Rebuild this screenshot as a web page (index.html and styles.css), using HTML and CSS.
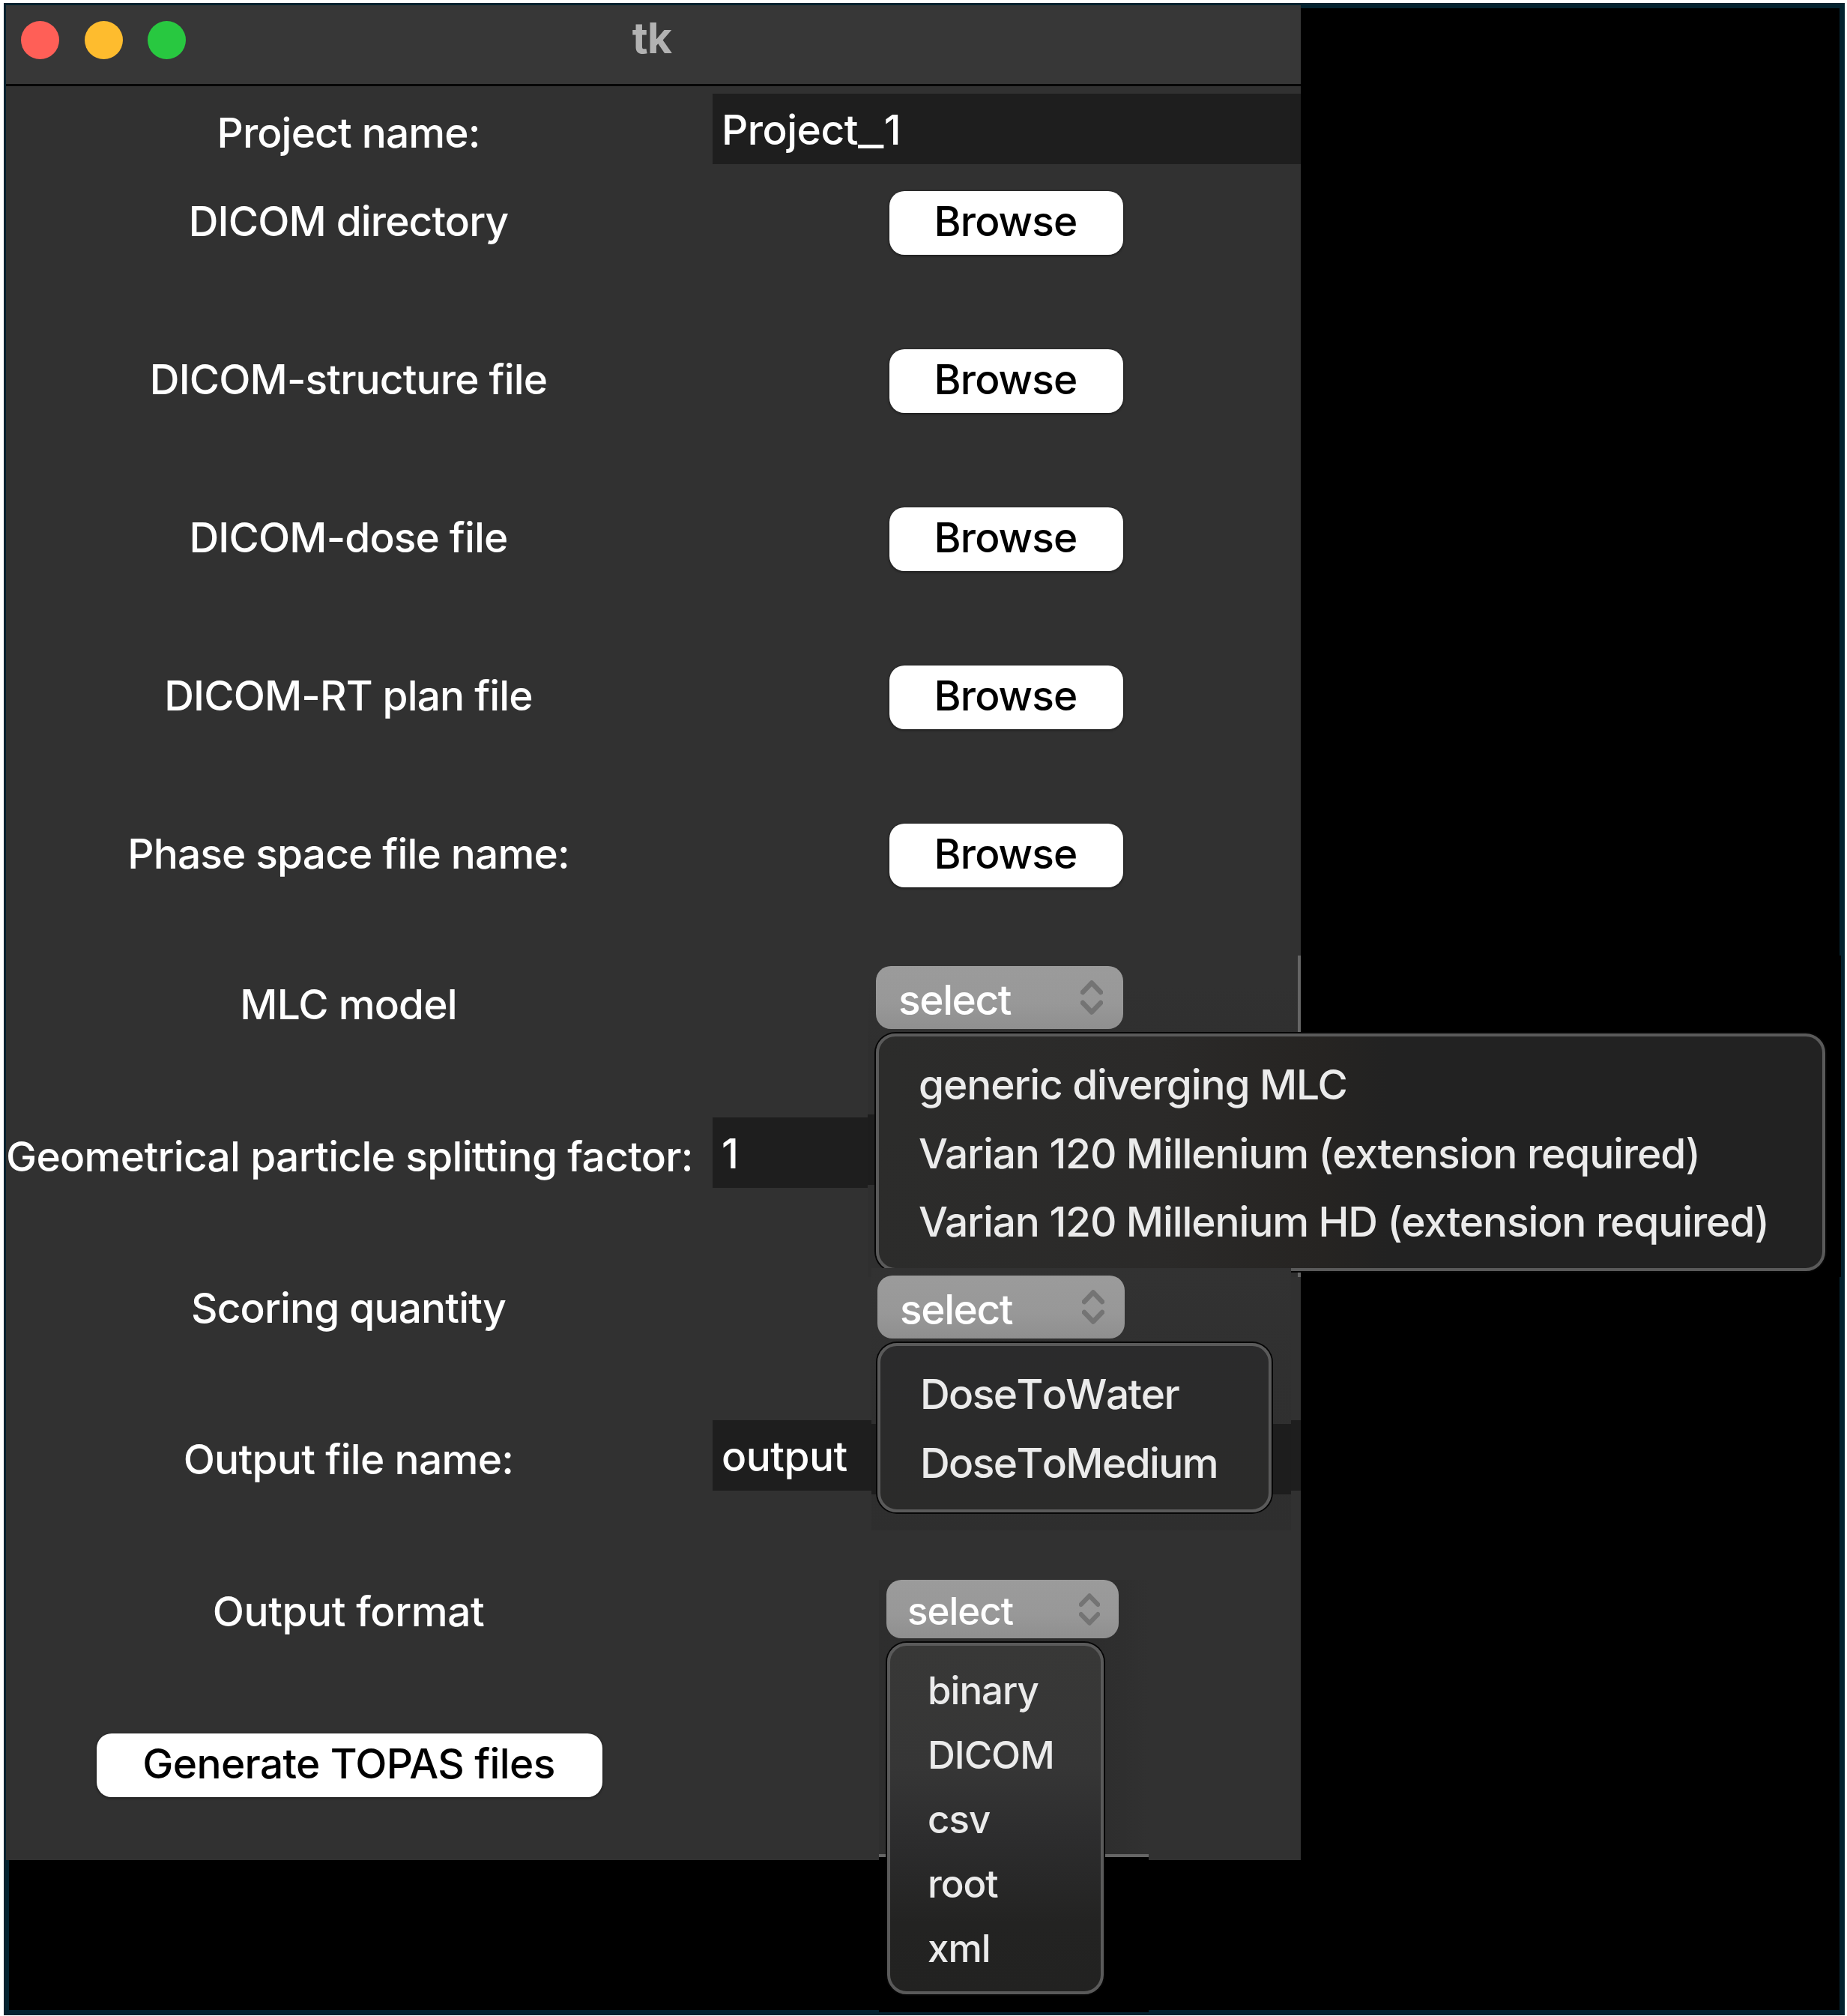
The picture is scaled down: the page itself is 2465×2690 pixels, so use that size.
FILE: index.html
```
<!DOCTYPE html>
<html lang="en">
<head>
<meta charset="utf-8">
<title>tk</title>
<link rel="stylesheet" href="styles.css">
</head>
<body>
<main class="desk">
  <section class="window">
    <header class="titlebar">
      <div class="lights">
        <i class="light light-close"></i><i class="light light-min"></i><i class="light light-zoom"></i>
      </div>
      <h1 class="title">tk</h1>
    </header>
    <div class="form">
      <label class="label">Project name:</label>
      <div class="cell"><div class="entry">Project<span class="underscore">_</span>1</div></div>

      <label class="label">DICOM directory</label>
      <div class="cell"><button class="button browse">Browse</button></div>

      <label class="label">DICOM-structure file</label>
      <div class="cell"><button class="button browse">Browse</button></div>

      <label class="label">DICOM-dose file</label>
      <div class="cell"><button class="button browse">Browse</button></div>

      <label class="label">DICOM-RT plan file</label>
      <div class="cell"><button class="button browse">Browse</button></div>

      <label class="label">Phase space file name:</label>
      <div class="cell"><button class="button browse">Browse</button></div>

      <label class="label">MLC model</label>
      <div class="cell cell-mlc">
        <div class="sheet sheet-mlc"><div class="sheet-bg"><div class="sheet-entry"></div></div></div>
        <div class="select">select
          <svg class="arrows" viewBox="0 0 30 46"><path d="M3 16 15 3.500 27 16M3 30 15 42.500 27 30"/></svg>
        </div>
        <ul class="menu menu-mlc">
          <li>generic diverging MLC</li>
          <li>Varian 120 Millenium (extension required)</li>
          <li>Varian 120 Millenium HD (extension required)</li>
        </ul>
      </div>

      <label class="label loose">Geometrical particle splitting factor:</label>
      <div class="cell"><div class="entry">1</div></div>

      <label class="label">Scoring quantity</label>
      <div class="cell cell-score">
        <div class="sheet sheet-score"><div class="sheet-entry"></div></div>
        <div class="select">select
          <svg class="arrows" viewBox="0 0 30 46"><path d="M3 16 15 3.500 27 16M3 30 15 42.500 27 30"/></svg>
        </div>
        <ul class="menu menu-score">
          <li>DoseToWater</li>
          <li>DoseToMedium</li>
        </ul>
      </div>

      <label class="label loose">Output file name:</label>
      <div class="cell"><div class="entry">output</div></div>

      <label class="label wide">Output format</label>
      <div class="cell cell-format">
        <div class="sheet sheet-format"><div class="sheet-bg"></div></div>
        <div class="select">select
          <svg class="arrows" viewBox="0 0 30 46"><path d="M3 16 15 3.500 27 16M3 30 15 42.500 27 30"/></svg>
        </div>
        <ul class="menu menu-format">
          <li>binary</li>
          <li>DICOM</li>
          <li>csv</li>
          <li>root</li>
          <li>xml</li>
        </ul>
      </div>

      <div class="action"><button class="button generate">Generate TOPAS files</button></div>
    </div>
  </section>
</main>
</body>
</html>
```

FILE: styles.css
```
* { box-sizing: border-box; }

body {
  margin: 0;
  padding: 4px 0 0 5px;
  background: #fff;
  color: #fff;
  font: 450 55px/112px Inter, "Liberation Sans", sans-serif;
  letter-spacing: -.85px;
  white-space: nowrap;
}

.desk {
  width: 2457px;
  height: 2685px;
  border: 7px solid #04222f;
  background: #000;
}

/* The window covers part of the desk's edge at the top left. */
.window {
  width: 1728px;
  height: 2475px;
  margin: -4px 0 0 -4px;
  background: #313131;
}

.titlebar {
  position: relative;
  display: flex;
  justify-content: center;
  height: 108px;
  border-bottom: 3px solid #060606;
  background: #373737;
}

.lights {
  position: absolute;
  left: 20px;
  top: 21px;
  display: flex;
  gap: 33.500px;
}
.light { width: 51px; height: 51px; border-radius: 50%; }
.light-close { background: #ff5f57; }
.light-min { background: #febc2e; }
.light-zoom { background: #28c840; }

.title {
  margin: 0;
  padding-right: 4px;
  color: #b2b2b2;
  font-size: 57px;
  font-weight: 700;
  line-height: 88px;
}

.form {
  display: grid;
  grid-template-columns: 943px 785px;
  grid-template-rows: 118px 211px 211px 211px 211px 201px 203px 202px 202px 203px 203px 184px;
  padding-top: 6px;
}

.label { padding-right: 29px; text-align: center; }
.loose { letter-spacing: -.68px; }
.wide { letter-spacing: -.4px; }

.cell { position: relative; padding-top: 4px; }

.entry {
  height: 94px;
  padding-left: 12px;
  background: #1e1e1e;
  letter-spacing: -.5px;
  line-height: 96px;
}
.underscore {
  display: inline-block;
  width: 35px;
  transform: scaleX(1.35);
  transform-origin: 0 0;
}

.button {
  display: block;
  height: 85px;
  border: 0;
  padding: 0 2px 5px 0;
  border-radius: 20px;
  background: #fff;
  color: #000;
  box-shadow: 0 1px 3px 1px rgba(0, 0, 0, .35);
  font: inherit;
  letter-spacing: -.9px;
  line-height: 80px;
}
.browse { width: 312px; margin: 12px 0 0 236px; }
.action { padding: 16px 0 0 121px; }
.generate { width: 675px; letter-spacing: -.65px; }

.select {
  position: relative;
  z-index: 1;
  display: flex;
  align-items: center;
  justify-content: space-between;
  width: 330px;
  height: 84px;
  padding: 0 27px 0 30px;
  border-radius: 20px;
  background: linear-gradient(#9b9b9b, #989898 60%, #8f8f8f);
  font-weight: 500;
  letter-spacing: -1.4px;
  line-height: 84px;
  padding-top: 5px;
}
.arrows {
  width: 30px;
  height: 46px;
  margin-top: -5px;
  fill: none;
  stroke: #747474;
  stroke-width: 6.500px;
  stroke-linecap: round;
  stroke-linejoin: round;
}

.menu {
  position: absolute;
  z-index: 1;
  margin: 0;
  padding: 19px 0 0 53px;
  border: 4px solid #5a5a5a;
  border-radius: 26px;
  box-shadow: 0 0 0 2px #060606;
  color: #ebebeb;
  letter-spacing: -1.1px;
  line-height: 91.500px;
  list-style: none;
}

/* Backdrops behind the open menus, each with its own shade of the window. */
.sheet { position: absolute; background: #2f2f2f; overflow: hidden; }
.sheet-entry { position: absolute; left: 0; width: 100%; height: 94px; background: #1d1d1d; }

.cell-mlc { z-index: 2; padding: 5px 0 0 218px; }
.sheet-mlc { left: 207px; top: -9px; width: 1299px; height: 429px; background: #000; }
.sheet-bg { position: relative; width: 578px; height: 100%; border-right: 4px solid #666; background: linear-gradient(#313131 10%, #2f2f2f 30%); }
.sheet-mlc .sheet-entry { top: 212px; }
.menu-mlc {
  left: 218px;
  top: 95px;
  width: 1267px;
  height: 317px;
  background: linear-gradient(90deg, #2c2c2b, #2b2a29 30%, #262422 47%, #222 54%);
}

.cell-score { z-index: 3; padding: 13px 0 0 220px; }
.sheet-score { left: 212px; top: 3px; width: 560px; height: 350px; background: linear-gradient(#323232, #303030 40%, #2e2e2e); }
.sheet-score .sheet-entry { top: 208px; }
.menu-score {
  left: 220px;
  top: 103px;
  width: 526px;
  height: 226px;
  background: linear-gradient(#2b2b2c, #2b2b2a);
  font-kerning: none;
  letter-spacing: -1.6px;
}

.cell-format { z-index: 3; padding: 14px 0 0 232px; }
.sheet-format { left: 222px; top: 14px; width: 360px; height: 577px; background: #000; }
.sheet-format .sheet-bg { width: 360px; height: 370px; border: 0; border-bottom: 4px solid #666; background: linear-gradient(90deg, #2e2e2e, #2d2d2d 80%, #313131); }
.cell-format .select {
  width: 310px;
  height: 78px;
  padding: 5px 25px 0 28px;
  font-size: 51px;
  letter-spacing: -1px;
  line-height: 78px;
}
.cell-format .arrows { width: 28px; height: 43px; }
.menu-format {
  left: 233px;
  top: 98px;
  width: 289px;
  height: 469px;
  padding: 17px 0 0 50px;
  background: linear-gradient(#383837, #363636 35%, #2d2d2e 55%, #232322 80%, #222221);
  font-size: 51px;
  letter-spacing: -1px;
  line-height: 86px;
}
```
